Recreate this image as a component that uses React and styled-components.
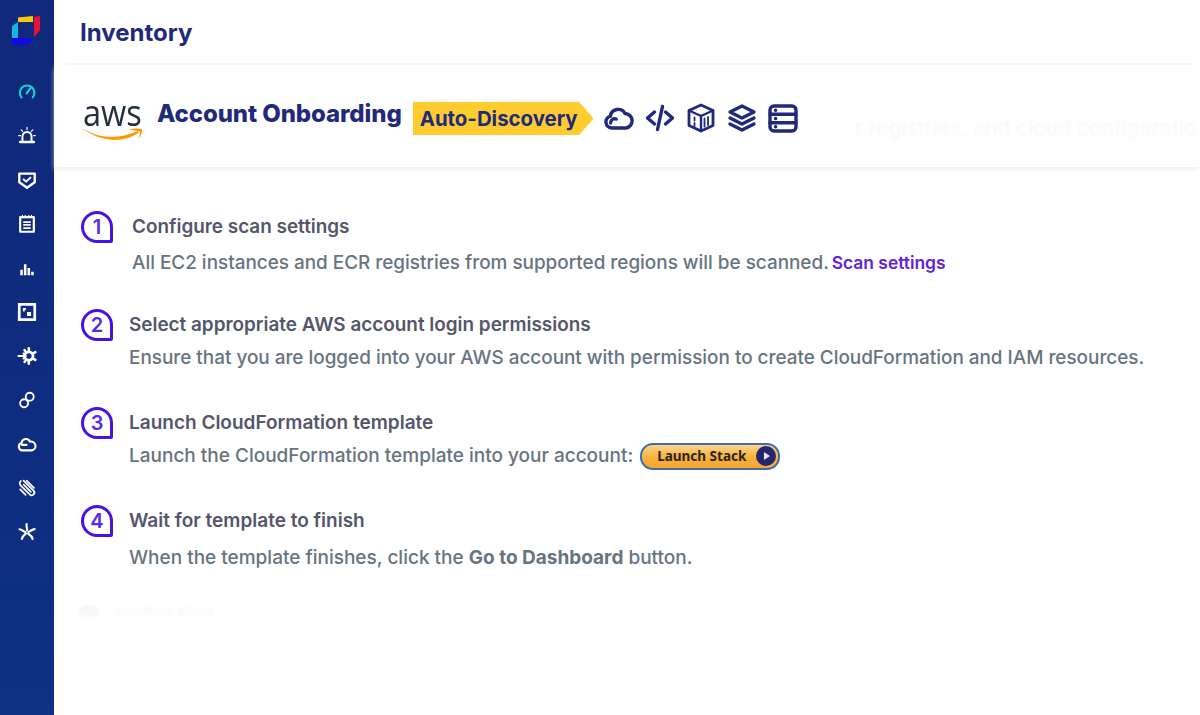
import React from "react";
import styled, { createGlobalStyle } from "styled-components";

const NAVY = "#1f2a7a";

const GlobalStyle = createGlobalStyle`
  html, body {
    margin: 0;
    padding: 0;
    background: #fff;
    font-family: Inter, "Liberation Sans", sans-serif;
  }
  #root {
    height: 715px;
    overflow: hidden;
  }
`;

const sideIcons = [
  {
    key: "gauge",
    active: true,
    body: (
      <>
        <path d="M5 17a8 8 0 1 1 12.400-.2" strokeWidth="2.400" />
        <path d="M10.600 12.400l4.400-6" strokeWidth="2.400" />
      </>
    ),
  },
  {
    key: "alarm",
    body: (
      <>
        <path d="M6 16.500v-5a5 5 0 0 1 10 0v5" strokeWidth="2.200" />
        <path d="M3.500 17.500h15" strokeWidth="2.800" />
        <path d="M11 1.500v2.400M4.600 4.300l1.600 1.600M17.400 4.300l-1.600 1.600M1.800 10.500h2M18.200 10.500h2" strokeWidth="1.300" />
      </>
    ),
  },
  {
    key: "shield",
    body: (
      <>
        <path d="M2.500 4h17v9.500l-8.500 6-8.500-6z" strokeWidth="2.600" />
        <path d="M7.400 10.400l2.600 2.400 4.800-4.400" strokeWidth="2.200" />
      </>
    ),
  },
  {
    key: "notes",
    body: (
      <>
        <path d="M3.500 3.500h15v16h-15z" strokeWidth="2.400" />
        <path d="M6 1.500v2.500M9 1.500v2.500M13 1.500v2.500M16 1.500v2.500" strokeWidth="1.300" />
        <path d="M7.500 9h7M7.500 12h7M7.500 15.500h7" strokeWidth="1.800" />
      </>
    ),
  },
  {
    key: "bars",
    body: (
      <path d="M5 19v-6M9 19V7M13 19v-8M17 19v-4" strokeWidth="2.800" strokeLinecap="butt" />
    ),
  },
  {
    key: "frame",
    body: (
      <>
        <path d="M2.500 2.500h17v17h-17z" strokeWidth="3" strokeLinejoin="miter" />
        <path d="M6.500 6.500h3.500v2h-1.500v2h-2zM11 11h4.500v4.500H11z" fill="#fff" stroke="none" />
      </>
    ),
  },
  {
    key: "gear",
    body: (
      <>
        <circle cx="13" cy="11" r="4.600" strokeWidth="3" />
        <path d="M13 2.500v2.800M13 16.700v2.800M20.200 6.800l-2.400 1.400M20.200 15.200l-2.400-1.400M8.400 4.600l1.200 1.800M8.400 17.400l1.200-1.800" strokeWidth="2.800" />
        <path d="M1.500 11h8M7 8.200l2.800 2.800L7 13.800" strokeWidth="2" />
      </>
    ),
  },
  {
    key: "link",
    body: (
      <>
        <circle cx="14" cy="7.400" r="4.400" strokeWidth="2" />
        <circle cx="7.800" cy="14.600" r="4.400" strokeWidth="2" strokeDasharray="3 1.300" />
      </>
    ),
  },
  {
    key: "cloud",
    body: (
      <path d="M6 18a4.200 4.200 0 0 1-1-8.200 4.800 4.800 0 0 1 9.200-1.400 4.800 4.800 0 0 1 2.400 9.600zM5.500 12h5" strokeWidth="2.300" />
    ),
  },
  {
    key: "clip",
    body: (
      <>
        <path d="M7.200 2.800l11 11a3 3 0 0 1-4.300 4.300l-10-10a3.200 3.200 0 0 1 .4-4.800" strokeWidth="1.900" />
        <path d="M3.500 12.500l6 6M10.600 2.800l8 8M7.400 7.400l7.800 7.800" strokeWidth="1.900" />
      </>
    ),
  },
  {
    key: "spark",
    body: (
      <path d="M11 9c.4-2.200-1-4-.4-6.600M9.400 11C7.200 10.600 5.800 8.400 2.800 8M12.600 11c2.200-.8 4-3 6.800-3.200M9.800 12.800c-1.800 1.400-3.800 2.400-4.400 5.800M12.200 12.800c1.800 1.200 4.200 2.400 5 5.800" strokeWidth="2.400" />
    ),
  },
];

export default function App() {
  const steps = [
    {
      n: 1,
      title: "Configure scan settings",
      indent: 19,
      gap: 12,
      size: 18.9,
      body: (
        <>
          All EC2 instances and ECR registries from supported regions will be scanned.{" "}
          <ScanLink>Scan settings</ScanLink>
        </>
      ),
    },
    {
      n: 2,
      title: "Select appropriate AWS account login permissions",
      indent: 16,
      gap: 9,
      size: 18.9,
      body: "Ensure that you are logged into your AWS account with permission to create CloudFormation and IAM resources.",
    },
    {
      n: 3,
      title: "Launch CloudFormation template",
      indent: 16,
      gap: 9,
      size: 19,
      body: (
        <>
          Launch the CloudFormation template into your account:
          <LaunchButton>
            Launch Stack
            <PlayDot />
          </LaunchButton>
        </>
      ),
    },
    {
      n: 4,
      title: "Wait for template to finish",
      indent: 16,
      gap: 13,
      size: 19,
      body: (
        <>
          When the template finishes, click the <strong>Go to Dashboard</strong> button.
        </>
      ),
    },
  ];

  return (
    <>
      <GlobalStyle />
      <Page>
        <Sidebar>
          <Logo viewBox="12 16 28 29">
            <path d="M18 17.500L33 16v6H18z" fill="#fdc60a" />
            <path d="M34 17l6-1v14l-6 7z" fill="#e8142e" />
            <path d="M12 26l6-4v16h-6z" fill="#12b5dc" />
            <path d="M12 38h21l-5 7H12z" fill="#1208e0" />
          </Logo>
          <SideNav>
            {sideIcons.map((icon) => (
              <SideSlot key={icon.key}>
                <SideSvg $active={icon.active} viewBox="0 0 22 22">
                  {icon.body}
                </SideSvg>
              </SideSlot>
            ))}
          </SideNav>
        </Sidebar>

        <Main>
          <Header>
            <PageTitle>Inventory</PageTitle>
          </Header>
          <HeaderRule />

          <Banner>
            <AwsMark>
              <AwsText>aws</AwsText>
              <Swoosh viewBox="0 0 62 14">
                <path d="M0 1c8 7 22 12 33 12 9 0 18-3 24-7.500l-2-1.200C46 8 38 10 30 10 20 10 9 7 0 1z" fill="#f90" />
                <path d="M47 2.500c4-1 11-1.500 13-.3.7 2-1 7-3.500 9.500 1-3 2-6 1.500-7-1-1-6-.7-11-2.200z" fill="#f90" />
              </Swoosh>
            </AwsMark>
            <BannerTitle>Account Onboarding</BannerTitle>
            <Tag>Auto-Discovery</Tag>
            <ToolIcons>
              <ToolSvg viewBox="0 0 30 30">
                <path d="M8 25a6 6 0 0 1-1.600-11.800A7.800 7.800 0 0 1 21 10.500 7.300 7.300 0 0 1 22 25z" />
                <path d="M6.600 20c0-3 2.600-5 5.600-4" />
              </ToolSvg>
              <ToolSvg viewBox="0 0 30 30">
                <path d="M9.500 9L2.500 15l7 6M20.500 9l7 6-7 6M17.500 3.500L12.500 26.500" />
              </ToolSvg>
              <ToolSvg viewBox="0 0 30 30">
                <path d="M15 2l12 5.500v15L15 28 3 22.500v-15z" strokeWidth="2.800" />
                <path d="M3 7.500L15 13l12-5.500M15 13v15" strokeWidth="2.400" />
                <path d="M18.500 15.500v8M22 14v8M8.500 14.500v3M8.500 20v3" strokeWidth="1.800" />
              </ToolSvg>
              <ToolSvg viewBox="0 0 30 30">
                <path d="M15 3l12 6-12 6L3 9z" />
                <path d="M3 15l12 6 12-6M3 21l12 6 12-6" />
              </ToolSvg>
              <ToolSvg viewBox="0 0 30 30">
                <rect x="2" y="3" width="26" height="25" rx="4" />
                <path d="M2 11.300h26M2 19.700h26" />
                <path d="M7.500 7.200h.2M7.500 15.500h.2M7.500 23.800h.2" />
              </ToolSvg>
            </ToolIcons>
            <GhostText>r registries, and cloud configuratio</GhostText>
          </Banner>

          <StepList>
            {steps.map((step) => (
              <Step key={step.n}>
                <Bubble>{step.n}</Bubble>
                <StepText $indent={step.indent} $size={step.size}>
                  <StepTitle>{step.title}</StepTitle>
                  <StepBody $gap={step.gap}>{step.body}</StepBody>
                </StepText>
              </Step>
            ))}
          </StepList>

          <GhostRow>
            <GhostDot />
            <GhostLabel>Inventory status</GhostLabel>
          </GhostRow>
        </Main>
      </Page>
    </>
  );
}

const Page = styled.div`
  display: flex;
  width: 1200px;
  height: 715px;
  overflow: hidden;
  background: #fff;
`;

const Sidebar = styled.aside`
  width: 54px;
  flex: none;
  display: flex;
  flex-direction: column;
  align-items: center;
  background: linear-gradient(180deg, #10297a 0%, #0e2c80 60%, #0c3185 100%);
`;

const Logo = styled.svg`
  width: 28px;
  height: 29px;
  margin-top: 16px;
  margin-right: 2px;
  flex: none;
`;

const SideNav = styled.nav`
  display: flex;
  flex-direction: column;
  align-items: center;
  margin-top: 25px;
`;

const SideSlot = styled.div`
  height: 44px;
  display: flex;
  align-items: center;
  justify-content: center;
`;

const SideSvg = styled.svg`
  width: 20px;
  height: 20px;
  fill: none;
  stroke: ${(p) => (p.$active ? "#14cfd6" : "#fff")};
  stroke-width: 2;
  stroke-linecap: round;
  stroke-linejoin: round;
`;

const Main = styled.main`
  flex: 1;
  min-width: 0;
  display: flex;
  flex-direction: column;
`;

const Header = styled.header`
  height: 63px;
  flex: none;
  display: flex;
  align-items: center;
  padding: 2px 0 0 26px;
  box-sizing: border-box;
`;

const PageTitle = styled.h1`
  margin: 0;
  font-size: 24px;
  font-weight: 700;
  color: ${NAVY};
`;

const HeaderRule = styled.div`
  height: 2px;
  margin: 0 7px 0 12px;
  background: #f5f5fa;
`;

const Banner = styled.section`
  height: 102px;
  flex: none;
  display: flex;
  align-items: center;
  padding-left: 27px;
  box-shadow: 0 3px 5px -1px #ecedf4;
  position: relative;
  overflow: hidden;
`;

const AwsMark = styled.div`
  width: 63px;
  flex: none;
  display: flex;
  flex-direction: column;
  align-items: center;
  margin-top: 7px;
`;

const AwsText = styled.span`
  display: block;
  font-family: "Open Sans", sans-serif;
  font-size: 37px;
  font-weight: 500;
  line-height: 28px;
  color: #232f3e;
  transform: scaleX(0.88);
`;

const Swoosh = styled.svg`
  width: 62px;
  height: 14px;
  margin-top: 1px;
  flex: none;
`;

const BannerTitle = styled.h2`
  margin: 0 0 5px 13px;
  font-size: 24px;
  font-weight: 800;
  letter-spacing: -0.1px;
  color: ${NAVY};
  white-space: nowrap;
`;

const Tag = styled.div`
  width: 181px;
  height: 33px;
  margin: 5px 0 0 11px;
  padding-left: 7px;
  box-sizing: border-box;
  display: flex;
  align-items: center;
  font-size: 20.400px;
  font-weight: 700;
  color: ${NAVY};
  background: #fecc2f;
  clip-path: polygon(0 0, 92% 0, 100% 50%, 92% 100%, 0 100%);
`;

const ToolIcons = styled.div`
  display: flex;
  align-items: center;
  gap: 11px;
  margin: 3px 0 0 10px;
`;

const ToolSvg = styled.svg`
  width: 30px;
  height: 30px;
  fill: none;
  stroke: ${NAVY};
  stroke-width: 3.400;
  stroke-linecap: round;
  stroke-linejoin: round;
`;

const GhostText = styled.span`
  position: absolute;
  left: 801px;
  top: 50px;
  font-size: 21px;
  font-weight: 400;
  white-space: nowrap;
  color: #f8f8fa;
  filter: blur(1px);
`;

const StepList = styled.div`
  display: flex;
  flex-direction: column;
  padding: 44px 0 0 27px;
`;

const Step = styled.div`
  height: 98px;
  display: flex;
  align-items: flex-start;
`;

const Bubble = styled.div`
  width: 32px;
  height: 32px;
  flex: none;
  box-sizing: border-box;
  display: flex;
  align-items: center;
  justify-content: center;
  border: 3px solid #4a10ea;
  border-radius: 50% 50% 2px 50%;
  font-size: 20px;
  font-weight: 600;
  color: #5a2ae8;
`;

const StepText = styled.div`
  margin-left: ${(p) => p.$indent}px;
  padding-top: 4px;
  min-width: 0;
  font-size: ${(p) => p.$size}px;
`;

const StepTitle = styled.div`
  line-height: 24px;
  font-weight: 600;
  color: #54566a;
  white-space: nowrap;
`;

const StepBody = styled.div`
  display: flex;
  align-items: center;
  margin-top: ${(p) => p.$gap}px;
  height: 24px;
  line-height: 24px;
  font-weight: 500;
  color: #66747f;
  white-space: pre;

  strong {
    font-weight: 700;
  }
`;

const ScanLink = styled.a`
  margin-left: -2px;
  font-size: 17.400px;
  font-weight: 600;
  color: #6222d8;
`;

const LaunchButton = styled.button`
  width: 140px;
  height: 27px;
  margin-left: 7px;
  padding: 0 2px 0 15px;
  box-sizing: border-box;
  display: flex;
  align-items: center;
  justify-content: space-between;
  border: 2px solid #3f6cab;
  border-radius: 13px;
  background: linear-gradient(180deg, #fbd58e 0%, #f9b13e 55%, #f7a52e 100%);
  font-family: "Noto Sans", sans-serif;
  font-size: 13.500px;
  font-weight: 700;
  color: #2a2418;
`;

const PlayDot = styled.span`
  width: 20px;
  height: 20px;
  border-radius: 50%;
  background: #27256e;
  position: relative;

  &::after {
    content: "";
    position: absolute;
    left: 8px;
    top: 6px;
    border-left: 6px solid #e8e4f4;
    border-top: 4px solid transparent;
    border-bottom: 4px solid transparent;
  }
`;

const GhostRow = styled.div`
  display: flex;
  align-items: center;
  gap: 16px;
  margin: 0 0 0 24px;
  filter: blur(1px);
`;

const GhostDot = styled.span`
  width: 22px;
  height: 12px;
  border-radius: 50%;
  background: #f8f8f9;
`;

const GhostLabel = styled.span`
  font-size: 13px;
  color: #f6f6f8;
`;
